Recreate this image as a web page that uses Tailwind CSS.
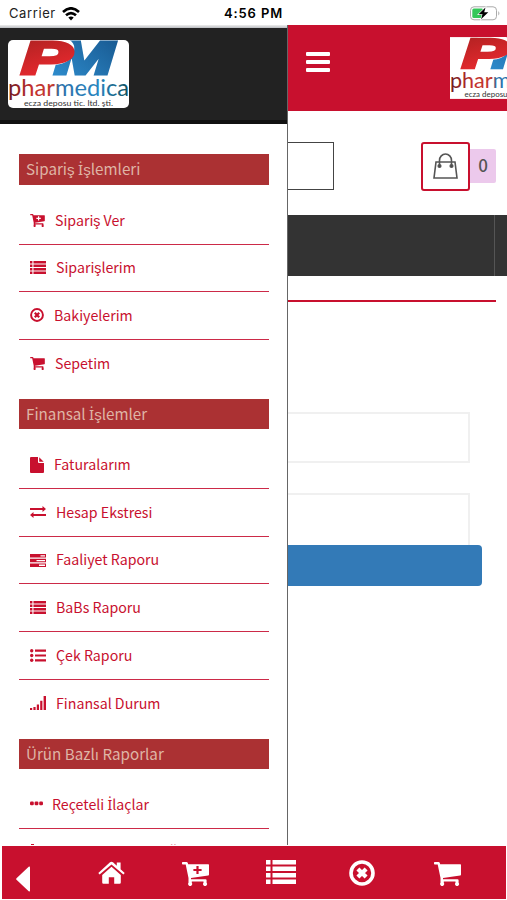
<!DOCTYPE html>
<html lang="tr">
<head>
    <meta charset="UTF-8">
    <meta name="viewport" content="width=device-width, initial-scale=1.0">
    <title>Pharmedica</title>
    <script src="https://cdn.jsdelivr.net/npm/@tailwindcss/browser@4"></script>
</head>
<body class="bg-white">
    <!-- Shared icons -->
    <svg class="absolute w-0 h-0">
        <defs>
            <linearGradient id="red" x1="0" y1="0" x2="0.3" y2="1">
                <stop offset="0" stop-color="#a5201f"/><stop offset="1" stop-color="#ee2a30"/>
            </linearGradient>
            <linearGradient id="blue" x1="1" y1="0" x2="0" y2="1">
                <stop offset="0" stop-color="#17568d"/><stop offset="1" stop-color="#2f8fd0"/>
            </linearGradient>
            <linearGradient id="word" x1="0" y1="0" x2="1" y2="0">
                <stop offset="0" stop-color="#6b1a22"/><stop offset=".2" stop-color="#c2302f"/><stop offset=".38" stop-color="#c0392f"/>
                <stop offset=".42" stop-color="#2d6ea8"/><stop offset=".75" stop-color="#2a86c0"/><stop offset="1" stop-color="#134e5c"/>
            </linearGradient>
        </defs>
        <symbol id="logo" viewBox="0 0 121 68">
            <rect width="121" height="68" fill="#fff"/>
            <text x="46" y="33.500" font-family="Liberation Sans" font-weight="700" font-style="italic" font-size="47" textLength="60" lengthAdjust="spacingAndGlyphs" fill="url(#blue)" stroke="url(#blue)" stroke-width="3">M</text>
            <path d="M30 -2H55Q68 0 66 11Q63 24 46 25L42 36H36Z" fill="#fff"/>
            <text x="13" y="33.500" font-family="Liberation Sans" font-weight="700" font-style="italic" font-size="47" textLength="51" lengthAdjust="spacingAndGlyphs" fill="url(#red)" stroke="url(#red)" stroke-width="3">P</text>
            <text x="0" y="55.500" font-family="Lato" font-size="22.500" textLength="121" lengthAdjust="spacingAndGlyphs" fill="url(#word)">pharmedica</text>
            <text x="16" y="65.500" font-family="Lato" font-size="8" textLength="89" lengthAdjust="spacingAndGlyphs" fill="#333">ecza deposu tic. ltd. şti.</text>
        </symbol>
        <symbol id="cart" viewBox="0 0 27 24">
            <path d="M0 .6Q0 0 .8 0H4.500Q5.500 0 5.800 1L6.200 2.300H26.400Q27 2.300 27 3V12.500Q27 13.300 26.200 13.500L9 16V17.300H23.500Q24.600 17.300 24.600 18.300V20.800A2 2 0 1 1 21.500 20.800V19.500H9.800V20.800A2 2 0 1 1 6.500 20.800V16L3.700 2.500H.8Q0 2.500 0 1.800Z" fill="currentColor"/>
        </symbol>
        <symbol id="cart-plus" viewBox="0 0 27 24">
            <path fill-rule="evenodd" d="M0 .6Q0 0 .8 0H4.500Q5.500 0 5.800 1L6.200 2.300H26.400Q27 2.300 27 3V12.500Q27 13.300 26.200 13.500L9 16V17.300H23.500Q24.600 17.300 24.600 18.300V20.800A2 2 0 1 1 21.500 20.800V19.500H9.800V20.800A2 2 0 1 1 6.500 20.800V16L3.700 2.500H.8Q0 2.500 0 1.800ZM14.400 4V7H11.400V9H14.400V12H16.600V9H19.600V7H16.600V4Z" fill="currentColor"/>
        </symbol>
        <symbol id="list" viewBox="0 0 30 24">
            <path d="M0 0H4.500V4.500H0ZM6.500 0H30V4.500H6.500ZM0 6.500H4.500V11H0ZM6.500 6.500H30V11H6.500ZM0 13H4.500V17.500H0ZM6.500 13H30V17.500H6.500ZM0 19.500H4.500V24H0ZM6.500 19.500H30V24H6.500Z" fill="currentColor"/>
        </symbol>
        <symbol id="remove" viewBox="0 0 26 26">
            <circle cx="13" cy="13" r="11" fill="none" stroke="currentColor" stroke-width="3.600"/>
            <path d="M8.900 8.900L17.100 17.100M17.100 8.900L8.900 17.100" stroke="currentColor" stroke-width="4.200"/>
        </symbol>
    </svg>

    <div class="relative flex flex-col w-[507px] h-[900px] overflow-hidden bg-white font-['Noto_Sans_CJK_SC',sans-serif]">
        <!-- Status bar -->
        <div class="flex items-center justify-between h-[25px] pl-[9px] pr-[6px] font-['Inter',sans-serif] text-[13px] text-[#222] shrink-0">
            <div class="flex items-center gap-[6px] w-[200px] pt-[3px]">
                <span class="tracking-[0.6px]">Carrier</span>
                <svg class="w-[18px] h-[14px]" viewBox="0 0 18 14" fill="none" stroke="#000" stroke-width="2.600">
                    <path d="M1 5Q9 -2.400 17 5M4 8.300Q9 3.800 14 8.300"/>
                    <path d="M6.300 10.600Q9 8.200 11.700 10.600L9 13.500Z" fill="#000" stroke="none"/>
                </svg>
            </div>
            <span class="-ml-[3px] font-semibold text-black pt-[3px] tracking-[0.9px]">4:56 PM</span>
            <div class="flex justify-end w-[200px] pt-[1px]">
                <svg class="w-[31px] h-[15px]" viewBox="0 0 31 15">
                    <rect x=".5" y=".8" width="26" height="13" rx="3.500" fill="#fff" stroke="#aaa"/>
                    <rect x="2.300" y="2.600" width="11" height="9.400" rx="1.500" fill="#34c759"/>
                    <path d="M28.300 5Q30.500 7.300 28.300 9.600Z" fill="#aaa"/>
                    <path d="M15.500 1.500L8.500 8.300H12.500L11 13.300L18.300 6.300H14.200Z" fill="#000" stroke="#fff" stroke-width="1.200" paint-order="stroke"/>
                </svg>
            </div>
        </div>

        <div class="flex h-[820px] overflow-hidden shrink-0">
            <!-- Drawer -->
            <aside class="w-[288px] h-[820px] overflow-hidden border-r border-[#666] shrink-0">
                <div class="h-[3px] bg-linear-to-b from-[#eee] to-[#b9bcc0]"></div>
                <div class="h-[96px] bg-[#222] border-b-4 border-[#111] pt-[12px] pl-[8px]">
                    <svg class="w-[121px] h-[68px] rounded-[5px]"><use href="#logo"/></svg>
                </div>
                <nav class="pt-[30.4px] pl-[19px] pr-[18px] text-[#c8102e] text-[14.2px]">
                    <h2 class="h-[30.5px] leading-[29px] pl-[7px] bg-[#ab3133] text-[#dfb5a6] text-[15.2px]">Sipariş <span class="font-['Noto_Sans']">İ</span>şlemleri</h2>
                    <ul class="pt-[12px] pb-[11.5px]">
                        <li class="flex items-center h-[47.650px] pl-[11px] gap-[10px] border-b border-[#cc2a48]"><svg class="w-[15px] h-[13px]"><use href="#cart-plus"/></svg>Sipariş Ver</li>
                        <li class="flex items-center h-[47.650px] pl-[11px] gap-[10px] border-b border-[#cc2a48]"><svg class="w-[16px] h-[13px]"><use href="#list"/></svg>Siparişlerim</li>
                        <li class="flex items-center h-[47.650px] pl-[11px] gap-[10px] border-b border-[#cc2a48]"><svg class="w-[14px] h-[14px]"><use href="#remove"/></svg>Bakiyelerim</li>
                        <li class="flex items-center h-[47.650px] pl-[11px] gap-[10px]"><svg class="w-[15px] h-[13px]"><use href="#cart"/></svg>Sepetim</li>
                    </ul>
                    <h2 class="h-[30.5px] leading-[29px] pl-[7px] bg-[#ab3133] text-[#dfb5a6] text-[15.2px]">Finansal <span class="font-['Noto_Sans']">İ</span>şlemler</h2>
                    <ul class="pt-[12px] pb-[11.5px]">
                        <li class="flex items-center h-[47.650px] pl-[11px] gap-[10px] border-b border-[#cc2a48]">
                            <svg class="w-[14px] h-[16px]" viewBox="0 0 14 16" fill="currentColor"><path d="M1 0H8V5Q8 6 9 6H14V15Q14 16 13 16H1Q0 16 0 15V1Q0 0 1 0ZM9.200 .2L13.700 4.800H9.200Z"/></svg>Faturalarım
                        </li>
                        <li class="flex items-center h-[47.650px] pl-[11px] gap-[10px] border-b border-[#cc2a48]">
                            <svg class="w-[16px] h-[12px]" viewBox="0 0 16 12" fill="currentColor"><path d="M0 2H12.500V0L16 3L12.500 6V4H0ZM16 8H3.500V6L0 9L3.500 12V10H16Z"/></svg>Hesap Ekstresi
                        </li>
                        <li class="flex items-center h-[47.650px] pl-[11px] gap-[10px] border-b border-[#cc2a48]">
                            <svg class="w-[16px] h-[13px]" viewBox="0 0 16 13" fill="currentColor"><path fill-rule="evenodd" d="M0 0H16V3.600H0ZM10.500 1.200V2.500H15V1.200ZM0 4.700H16V8.300H0ZM6.500 5.900V7.200H15V5.900ZM0 9.400H16V13H0ZM9 10.600V11.900H15V10.600Z"/></svg>Faaliyet Raporu
                        </li>
                        <li class="flex items-center h-[47.650px] pl-[11px] gap-[10px] border-b border-[#cc2a48]"><svg class="w-[16px] h-[13px]"><use href="#list"/></svg>BaBs Raporu</li>
                        <li class="flex items-center h-[47.650px] pl-[11px] gap-[10px] border-b border-[#cc2a48]">
                            <svg class="w-[16px] h-[13px]" viewBox="0 0 16 13" fill="currentColor"><circle cx="1.700" cy="1.700" r="1.700"/><circle cx="1.700" cy="6.500" r="1.700"/><circle cx="1.700" cy="11.300" r="1.700"/><path d="M5 .6H16V2.800H5ZM5 5.400H16V7.600H5ZM5 10.200H16V12.400H5Z"/></svg>Çek Raporu
                        </li>
                        <li class="flex items-center h-[47.650px] pl-[11px] gap-[10px]">
                            <svg class="w-[16px] h-[14px]" viewBox="0 0 16 14" fill="currentColor"><path d="M0 12H2.200V14H0ZM3.400 11H5.600V14H3.400ZM6.800 8.500H9V14H6.800ZM10.200 4.800H12.400V14H10.200ZM13.600 0H16V14H13.600Z"/></svg>Finansal Durum
                        </li>
                    </ul>
                    <h2 class="h-[30.5px] leading-[29px] pl-[7px] bg-[#ab3133] text-[#dfb5a6] text-[15.2px]">Ürün Bazlı Raporlar</h2>
                    <ul class="pt-[12px]">
                        <li class="flex items-center h-[47.650px] pl-[11px] gap-[9px] border-b border-[#cc2a48]">
                            <svg class="w-[13px] h-[5px] mb-[2px]" viewBox="0 0 13 5" fill="currentColor"><rect y=".5" width="3.800" height="3.800" rx="1.200"/><rect x="4.600" y=".5" width="3.800" height="3.800" rx="1.200"/><rect x="9.200" y=".5" width="3.800" height="3.800" rx="1.200"/></svg>
                            <span>Reçeteli <span class="font-['Noto_Sans']">İ</span>laçlar</span>
                        </li>
                        <li class="flex items-center h-[47.650px] pl-[11px] gap-[10px]">
                            <svg class="w-[14px] h-[17px]" viewBox="0 0 14 17" fill="currentColor"><path d="M1 0H4V3H14V17H0V3H1Z"/></svg>En Fazla Satılmış Ürünler
                        </li>
                    </ul>
                </nav>
            </aside>

            <!-- Page behind the drawer -->
            <main class="flex-1 overflow-hidden">
                <header class="flex justify-between h-[86px] bg-[#c8102e] pl-[18px]">
                    <div class="flex flex-col gap-[4px] w-[24px] pt-[27px]">
                        <span class="h-[4px] rounded-[1px] bg-white"></span>
                        <span class="h-[4px] rounded-[1px] bg-white"></span>
                        <span class="h-[4px] rounded-[1px] bg-white"></span>
                    </div>
                    <div class="w-[57px] pt-[12px] overflow-hidden">
                        <svg class="w-[110px] h-[62px] max-w-none"><use href="#logo"/></svg>
                    </div>
                </header>
                <div class="flex justify-between h-[104px] pt-[31px] pr-[11px]">
                    <div class="w-[46px] h-[48px] border border-l-0 border-[#444]"></div>
                    <div class="flex items-center h-[48px]">
                        <div class="flex items-center justify-center w-[49px] h-[49px] border-2 border-[#c8102e] rounded-[3px]">
                            <svg class="w-[25px] h-[26px]" viewBox="0 0 25 26" fill="none" stroke="#555" stroke-width="1.600">
                                <path d="M3 9H22L24 25H1ZM6.500 12.500V7.500A6 6.500 0 0 1 18.500 7.500V12.500"/>
                                <circle cx="6.500" cy="13" r="1.300" fill="#444"/><circle cx="18.500" cy="13" r="1.300" fill="#444"/>
                            </svg>
                        </div>
                        <span class="w-[26px] h-[34px] leading-[32px] text-center text-[17px] font-medium text-[#555] bg-[#ecc9ec] rounded-r-[2px]">0</span>
                    </div>
                </div>
                <div class="flex h-[61px] bg-[#333] pr-[12px]">
                    <div class="flex-1 border-r border-[#555]"></div>
                </div>
                <div class="h-[2px] mt-[24px] mr-[11px] bg-[#c8102e]"></div>
                <form class="flex flex-col pt-[110px]">
                    <div class="h-[51px] w-[182px] border-2 border-l-0 border-[#f0f0f0]"></div>
                    <div class="h-[52px] w-[182px] mt-[30px] border-2 border-l-0 border-b-0 border-[#f0f0f0]"></div>
                    <div class="h-[41px] w-[194px] bg-[#337ab7] rounded-r-[4px]"></div>
                </form>
            </main>
        </div>

        <!-- Bottom navigation -->
        <nav class="relative h-[53px] mt-[1px] ml-[2px] w-[504px] bg-[#c8102e] text-white shrink-0">
            <svg class="absolute left-[14px] top-[20px] w-[14px] h-[26px]" viewBox="0 0 14 26"><path d="M13 .5Q14 .2 14 1.500V24.500Q14 25.800 13 25.500L.5 13.800Q-.2 13 .5 12.200Z" fill="currentColor"/></svg>
            <svg class="absolute left-[96px] top-[15px] w-[27px] h-[23px]" viewBox="0 0 27 23"><path d="M13.500 5.800L22.800 14V21.600Q22.800 22.800 21.600 22.800H16.200V16.200H10.800V22.800H5.400Q4.200 22.800 4.200 21.600V14ZM.3 12L12 1.300Q13.500 .1 15 1.300L18.800 4.800V1.500H22.600V8.200L26.700 12L25.400 13.500L13.500 3.500L1.600 13.500Z" fill="currentColor"/></svg>
            <svg class="absolute left-[180px] top-[16px] w-[27px] h-[24px]"><use href="#cart-plus"/></svg>
            <svg class="absolute left-[264px] top-[14px] w-[30px] h-[24px]"><use href="#list"/></svg>
            <svg class="absolute left-[347px] top-[14px] w-[26px] h-[26px]"><use href="#remove"/></svg>
            <svg class="absolute left-[432px] top-[16px] w-[27px] h-[24px]"><use href="#cart"/></svg>
        </nav>
    </div>
</body>
</html>
